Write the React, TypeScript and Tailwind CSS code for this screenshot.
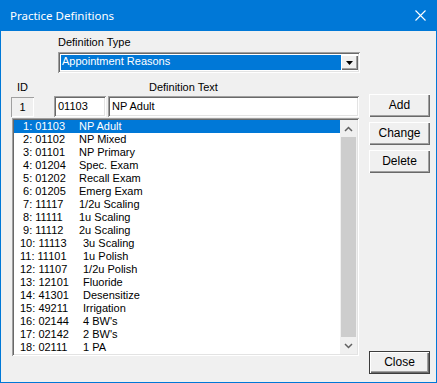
import React from 'react';

const rows: [number, string, string][] = [
  [1, '01103', 'NP Adult'],
  [2, '01102', 'NP Mixed'],
  [3, '01101', 'NP Primary'],
  [4, '01204', 'Spec. Exam'],
  [5, '01202', 'Recall Exam'],
  [6, '01205', 'Emerg Exam'],
  [7, '11117', '1/2u Scaling'],
  [8, '11111', '1u Scaling'],
  [9, '11112', '2u Scaling'],
  [10, '11113', '3u Scaling'],
  [11, '11101', '1u Polish'],
  [12, '11107', '1/2u Polish'],
  [13, '12101', 'Fluoride'],
  [14, '41301', 'Desensitize'],
  [15, '49211', 'Irrigation'],
  [16, '02144', "4 BW's"],
  [17, '02142', "2 BW's"],
  [18, '02111', '1 PA'],
];

const sunken =
  'shadow-[inset_1px_1px_#a0a0a0,inset_-1px_-1px_#ffffff,inset_2px_2px_#696969,inset_-2px_-2px_#e3e3e3]';
const raised =
  'shadow-[inset_1px_1px_#ffffff,inset_-1px_-1px_#696969,inset_-2px_-2px_#a0a0a0]';

function Button({ label, isDefault }: { label: string; isDefault?: boolean }) {
  return (
    <div
      className={
        isDefault
          ? 'h-[23px] w-[61px] border border-[#3c3c3c] bg-[#f0f0f0]'
          : 'h-[23px] w-[61px] bg-[#f0f0f0]'
      }
    >
      <div className={`flex h-full w-full items-center justify-center pb-[1px] text-[12px] text-black ${raised}`}>
        {label}
      </div>
    </div>
  );
}

export default function App() {
  return (
    <div
      className="flex h-[383px] w-[437px] flex-col bg-[#0078d7] text-[11px] leading-[13px] text-black"
      style={{ fontFamily: '"Liberation Sans", Arial, sans-serif' }}
    >
      {/* title bar */}
      <div className="flex h-[31px] items-center justify-between pl-[10px] pr-[10px] pb-[1px]">
        <span
          className="text-[11.5px] text-white"
          style={{ fontFamily: '"Noto Sans", "Open Sans", sans-serif' }}
        >
          Practice Definitions
        </span>
        <svg width="11" height="11" viewBox="0 0 11 11" className="mr-[1px]">
          <path d="M0.5 0.5 L10.5 10.5 M10.5 0.5 L0.5 10.5" stroke="#ffffff" strokeWidth="1.1" />
        </svg>
      </div>

      {/* body */}
      <div className="mx-[1px] mb-[1px] flex flex-1 flex-col bg-[#f0f0f0]">
        <div className="pl-[57px] pt-[5px]">
          <div className="h-[13px]">Definition Type</div>
          <div className={`mt-[3px] flex h-[21px] w-[302px] bg-white p-[3px] pr-[2px] ${sunken}`}>
            <div className="flex-1 bg-[#0078d7] pl-[1px] text-white">Appointment Reasons</div>
            <div className={`flex w-[17px] items-center justify-center bg-[#f0f0f0] ${raised}`}>
              <svg width="7" height="4" viewBox="0 0 7 4">
                <path d="M0 0 H7 L3.5 4 Z" fill="#000" />
              </svg>
            </div>
          </div>
        </div>

        <div className="mt-[8px] flex h-[13px]">
          <span className="ml-[16px]">ID</span>
          <span className="ml-[121px]">Definition Text</span>
        </div>

        <div className="flex flex-1 pb-[8px]">
          {/* left column */}
          <div className="flex flex-col">
            <div className="mt-[2px] flex h-[21px]">
              <div className="ml-[10px] mt-[1px] flex h-[20px] w-[23px] items-center justify-center shadow-[inset_1px_1px_#a0a0a0,inset_-1px_-1px_#ffffff]">
                1
              </div>
              <div className={`ml-[20px] flex h-[21px] w-[52px] items-center bg-white pl-[4px] ${sunken}`}>01103</div>
              <div className={`ml-[2px] flex h-[21px] w-[251px] items-center bg-white pl-[4px] ${sunken}`}>NP Adult</div>
            </div>

            <div className={`ml-[11px] mt-[1px] flex h-[238px] w-[347px] bg-white p-[2px] ${sunken}`}>
              <div className="flex-1">
                {rows.map(([n, code, name]) => (
                  <div
                    key={n}
                    className={n === 1 ? 'flex h-[13px] bg-[#0078d7] text-white' : 'flex h-[13px]'}
                  >
                    <span className={n < 10 ? 'w-[65px] pl-[9px]' : 'w-[69px] pl-[6px]'}>
                      {n}: {code}
                    </span>
                    <span>{name}</span>
                  </div>
                ))}
              </div>
              {/* scrollbar */}
              <div className="flex w-[17px] flex-col bg-[#f0f0f0]">
                <div className="flex h-[17px] items-center justify-center">
                  <svg width="9" height="6" viewBox="0 0 9 6">
                    <path d="M1 5 L4.5 1.5 L8 5" stroke="#606060" strokeWidth="1.5" fill="none" />
                  </svg>
                </div>
                <div className="mx-[1px] flex-1 bg-[#cdcdcd]" />
                <div className="flex h-[17px] items-center justify-center">
                  <svg width="9" height="6" viewBox="0 0 9 6">
                    <path d="M1 1 L4.5 4.5 L8 1" stroke="#606060" strokeWidth="1.5" fill="none" />
                  </svg>
                </div>
              </div>
            </div>
          </div>

          {/* right column */}
          <div className="ml-[10px] flex flex-col">
            <Button label="Add" />
            <div className="mt-[5px]">
              <Button label="Change" />
            </div>
            <div className="mt-[5px]">
              <Button label="Delete" />
            </div>
            <div className="mt-auto">
              <Button label="Close" isDefault />
            </div>
          </div>
        </div>
      </div>
    </div>
  );
}
